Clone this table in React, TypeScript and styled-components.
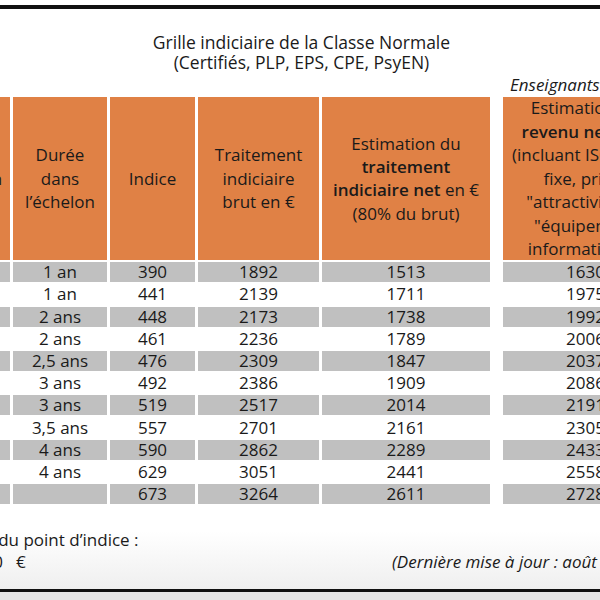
import React from "react";
import styled, { createGlobalStyle } from "styled-components";

const GlobalStyle = createGlobalStyle`
  html, body { margin: 0; padding: 0; background: #fff; }
  body {
    width: 600px; height: 600px; overflow: hidden;
    font-family: "Open Sans", "Noto Sans", sans-serif;
    color: #1a1a1a;
  }
`;

const Page = styled.div`
  width: 600px;
  height: 600px;
  overflow: hidden;
  display: flex;
  flex-direction: column;
  background: #fff;
`;

const TopRule = styled.div`
  flex: none;
  height: 4px;
  margin-top: 5px;
  background: #111;
`;

const Sheet = styled.div`
  flex: 1;
  display: flex;
  flex-direction: column;
  margin-left: -68px;
  width: 739px;
  background: linear-gradient(to bottom, #fff 0, #fff 90%, #efefef 100%);
`;

const BottomRule = styled.div`
  flex: none;
  height: 3px;
  background: #111;
`;

const Underlay = styled.div`
  flex: none;
  height: 8px;
  background: #e6e6e6;
`;

const Title = styled.div`
  margin-top: 22.5px;
  text-align: center;
  font-size: 17.5px;
  line-height: 20.5px;
`;

const Grid = styled.div`
  margin-top: 3.5px;
  display: grid;
  grid-template-columns: 78px 94px 85px 121px 168px 7px 165px;
  grid-template-rows: 18.5px 163.4px repeat(11, 20px);
  column-gap: 3px;
  row-gap: 2.2px;
`;

const GroupLabel = styled.div`
  grid-column: 7;
  font-style: italic;
  font-size: 17px;
  line-height: 18.5px;
  padding-left: 7px;
  white-space: nowrap;
`;

const HeadCell = styled.div<{ $col: number }>`
  grid-column: ${(p) => p.$col};
  background: #e08145;
  display: flex;
  align-items: center;
  justify-content: center;
  text-align: center;
  font-size: 17px;
  line-height: 23.4px;
  white-space: nowrap;
  b { font-weight: 600; }
`;

const Cell = styled.div<{ $col: number; $shaded: boolean }>`
  grid-column: ${(p) => p.$col};
  background: ${(p) => (p.$shaded ? "#c0c0c0" : "#fff")};
  text-align: center;
  font-size: 17px;
  line-height: 20px;
  white-space: nowrap;
`;

const Footer = styled.div`
  margin-top: 25px;
  padding-left: 11px;
  display: grid;
  grid-template-columns: 449px auto;
  font-size: 17px;
  line-height: 22px;
`;

const PointValue = styled.span`
  display: inline-block;
  padding-left: 7px;
`;

const Euro = styled.span`
  margin-left: 13px;
`;

const Note = styled.div`
  align-self: end;
  font-style: italic;
  white-space: nowrap;
`;

const rows: [string, string, number, number, number, number][] = [
  ["1", "1 an", 390, 1892, 1513, 1630],
  ["2", "1 an", 441, 2139, 1711, 1975],
  ["3", "2 ans", 448, 2173, 1738, 1992],
  ["4", "2 ans", 461, 2236, 1789, 2006],
  ["5", "2,5 ans", 476, 2309, 1847, 2037],
  ["6", "3 ans", 492, 2386, 1909, 2086],
  ["7", "3 ans", 519, 2517, 2014, 2191],
  ["8", "3,5 ans", 557, 2701, 2161, 2305],
  ["9", "4 ans", 590, 2862, 2289, 2433],
  ["10", "4 ans", 629, 3051, 2441, 2558],
  ["11", "", 673, 3264, 2611, 2728],
];

export default function App() {
  return (
    <>
      <GlobalStyle />
      <Page>
        <TopRule />
        <Sheet>
          <Title>
            Grille indiciaire de la Classe Normale
            <br />
            (Certifiés, PLP, EPS, CPE, PsyEN)
          </Title>
          <Grid>
            <GroupLabel>Enseignants du 2nd degré</GroupLabel>
            <HeadCell $col={1}>Échelon</HeadCell>
            <HeadCell $col={2}>
              <div>
                Durée
                <br />
                dans
                <br />
                l’échelon
              </div>
            </HeadCell>
            <HeadCell $col={3}>Indice</HeadCell>
            <HeadCell $col={4}>
              <div>
                Traitement
                <br />
                indiciaire
                <br />
                brut en €
              </div>
            </HeadCell>
            <HeadCell $col={5}>
              <div>
                Estimation du
                <br />
                <b>traitement</b>
                <br />
                <b>indiciaire net</b> en €
                <br />
                (80% du brut)
              </div>
            </HeadCell>
            <HeadCell $col={7}>
              <div>
                Estimation du
                <br />
                <b>revenu net</b> en €
                <br />
                (incluant ISOE part
                <br />
                fixe, prime
                <br />
                "attractivité" et
                <br />
                "équipement
                <br />
                informatique")
              </div>
            </HeadCell>
            {rows.map((r, i) => {
              const shaded = i % 2 === 0;
              return (
                <React.Fragment key={r[0]}>
                  <Cell $col={1} $shaded={shaded}>{r[0]}</Cell>
                  <Cell $col={2} $shaded={shaded}>{r[1]}</Cell>
                  <Cell $col={3} $shaded={shaded}>{r[2]}</Cell>
                  <Cell $col={4} $shaded={shaded}>{r[3]}</Cell>
                  <Cell $col={5} $shaded={shaded}>{r[4]}</Cell>
                  <Cell $col={7} $shaded={shaded}>{r[5]}</Cell>
                </React.Fragment>
              );
            })}
          </Grid>
          <Footer>
            <div>
              Valeur du point d’indice :
              <br />
              <PointValue>
                4,9230<Euro>€</Euro>
              </PointValue>
            </div>
            <Note>(Dernière mise à jour : août 2023)</Note>
          </Footer>
        </Sheet>
        <BottomRule />
        <Underlay />
      </Page>
    </>
  );
}
